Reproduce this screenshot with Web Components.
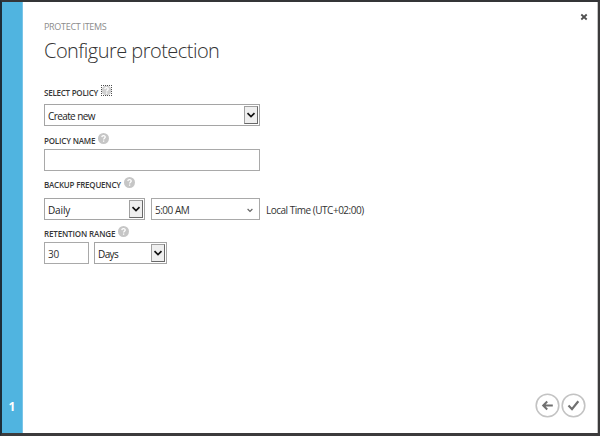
<!DOCTYPE html>
<html lang="en"><head><meta charset="utf-8"><title>Configure protection</title>
<style>
body{margin:0;font-family:"Open Sans","Noto Sans",sans-serif;color:#333;background:#3c3b3c}
</style></head><body>
<wizard-dialog step="1">
  <wizard-heading eyebrow="PROTECT ITEMS">Configure protection</wizard-heading>
  <form-field label="SELECT POLICY" focused style="--top:1px;--gap:4px;--ls:-.24px"><select-box style="--w:216px;--ls:-.6px">Create new</select-box></form-field>
  <form-field label="POLICY NAME" style="--top:7px;--gap:1px;--ls:-.18px"><text-box style="--w:216px"></text-box></form-field>
  <form-field label="BACKUP FREQUENCY" style="--top:6px;--gap:6px;--ls:-.22px">
    <select-box style="--w:101px;--ls:-.15px">Daily</select-box>
    <text-box arrow style="--w:109px;margin-left:6px;--ls:-.5px">5:00 AM</text-box>
    <span style="margin-left:6px;letter-spacing:-.49px">Local Time (UTC+02:00)</span>
  </form-field>
  <form-field label="RETENTION RANGE" style="--top:6px;--gap:1px;--ls:-.14px">
    <text-box style="--w:45px;--ls:-.2px">30</text-box>
    <select-box style="--w:73px;margin-left:5px;--ls:-.6px">Days</select-box>
  </form-field>
  <round-button slot="actions" icon="back"></round-button>
  <round-button slot="actions" icon="check"></round-button>
</wizard-dialog>
<script>
class Base extends HTMLElement{
  connectedCallback(){ if(!this.shadowRoot) this.attachShadow({mode:'open'}).innerHTML=this.view(); }
}
customElements.define('wizard-dialog',class extends Base{view(){return `<style>
:host{display:grid;grid-template-columns:21px 1fr;box-sizing:border-box;width:600px;height:436px;border:2px solid #3c3b3c;border-top-color:#343537;border-left-color:#1d2e38;border-bottom-width:3px;background:#3c3b3c;overflow:hidden}
.rail{background:#50b4e0;border-right:1px solid #7ac5e8;box-sizing:border-box;display:flex;align-items:flex-end;justify-content:center;color:#fff;font:700 12px/16px "Open Sans",sans-serif;padding-bottom:18px}
main{background:#fff;border-right:1px solid #c5c5c5;display:grid;grid-template-columns:1fr auto;grid-template-rows:1fr auto;padding:12px 11px 15px 21px}
footer{grid-column:1/3;display:flex;justify-content:flex-end;gap:1px}
.close{display:block;margin:-1px -2px 0 0}
</style><div class="rail">${this.getAttribute('step')}</div><main><div><slot></slot></div>
<svg class="close" width="8" height="8" viewBox="0 0 8 8"><path d="M1.3 1.5 6.7 6.5M6.7 1.5 1.3 6.5" stroke="#505050" stroke-width="1.8"/></svg>
<footer><slot name="actions"></slot></footer></main>`}});
customElements.define('wizard-heading',class extends Base{view(){return `<style>
:host{display:block;height:70px;box-sizing:border-box;padding-top:6px}
small{display:block;font-size:9px;line-height:14px;color:#8c8c8c;letter-spacing:-.3px}
h1{margin:3px 0 0;font-size:20px;line-height:28px;font-weight:300;color:#333;letter-spacing:-.53px}
</style><small>${this.getAttribute('eyebrow')}</small><h1><slot></slot></h1>`}});
customElements.define('form-field',class extends Base{view(){return `<style>
:host{display:block;padding-top:var(--top,0)}
.label{display:flex;align-items:flex-start;height:15px;margin-bottom:var(--gap);font-size:8px;line-height:16px;font-weight:600;letter-spacing:var(--ls,0);color:#383838}
help-icon{margin-left:3px}
.row{display:flex;height:22px;font-size:10px;line-height:24px;white-space:nowrap}
</style><div class="label"><span>${this.getAttribute('label')}</span><help-icon ${this.hasAttribute('focused')?'focused':''}></help-icon></div><div class="row"><slot></slot></div>`}});
customElements.define('help-icon',class extends Base{view(){return `<style>
:host{display:block;width:11px;height:11px}
svg{display:block}
</style><svg width="11" height="11" viewBox="0 0 11 11">${this.hasAttribute('focused')?
`<circle cx="5.5" cy="5.5" r="5" fill="#d0d0d0"/><path d="M0 .5H11M10.5 0V11M11 10.5H0M.5 11V0" fill="none" stroke="#505050" stroke-dasharray="1 1"/>`:
`<circle cx="5.5" cy="5.5" r="5.5" fill="#c6c6c6"/>`}
<path d="M3.8 4.1C3.9 2.2 7.3 2.3 7.2 4.1 7.1 5.3 5.6 5.2 5.6 6.6M5.6 7.5V8.8" fill="none" stroke="#fff" stroke-width="1.3"/></svg>`}});
customElements.define('select-box',class extends Base{view(){return `<style>
:host{display:flex;justify-content:space-between;box-sizing:border-box;width:var(--w);height:22px;border:1px solid #a5a5a5;background:#fff;padding:1px 1px 1px 3px;line-height:20px;color:#222;letter-spacing:var(--ls,0)}
.b{box-sizing:border-box;width:14px;height:18px;border:1px solid #a0a0a0;border-right-color:#686868;border-bottom-color:#686868;background:#efefef;display:grid;place-items:center}
svg{display:block}
</style><span><slot></slot></span><span class="b"><svg width="10" height="7" viewBox="0 0 10 7"><path d="M1.5 1.2 5 4.6 8.5 1.2" fill="none" stroke="#111" stroke-width="1.7"/></svg></span>`}});
customElements.define('text-box',class extends Base{view(){return `<style>
:host{display:flex;justify-content:space-between;align-items:center;box-sizing:border-box;width:var(--w);height:22px;border:1px solid #a9a9a9;background:#fff;padding:2px 6px 0 3px;line-height:18px;color:#333;letter-spacing:var(--ls,0)}
</style><span><slot></slot></span>${this.hasAttribute('arrow')?'<svg width="6" height="5" viewBox="0 0 6 5"><path d="M.6 1 3 3.4 5.4 1" fill="none" stroke="#666" stroke-width="1.2"/></svg>':''}`}});
customElements.define('round-button',class extends Base{view(){return `<style>
:host{display:block;width:25px;height:25px}svg{display:block}
</style><svg width="25" height="25" viewBox="0 0 25 25" fill="none"><circle cx="12.5" cy="12.5" r="11.3" stroke="#c3c3c3" stroke-width="1.6"/>
${this.getAttribute('icon')==='back'?'<path d="M17.8 12.5H8.2M12.2 8.5 8.2 12.5 12.2 16.5" stroke="#707070" stroke-width="2"/>':'<path d="M7.5 12.6 11 16.2 17.3 8.3" stroke="#707070" stroke-width="2.2"/>'}</svg>`}});
</script></body></html>
